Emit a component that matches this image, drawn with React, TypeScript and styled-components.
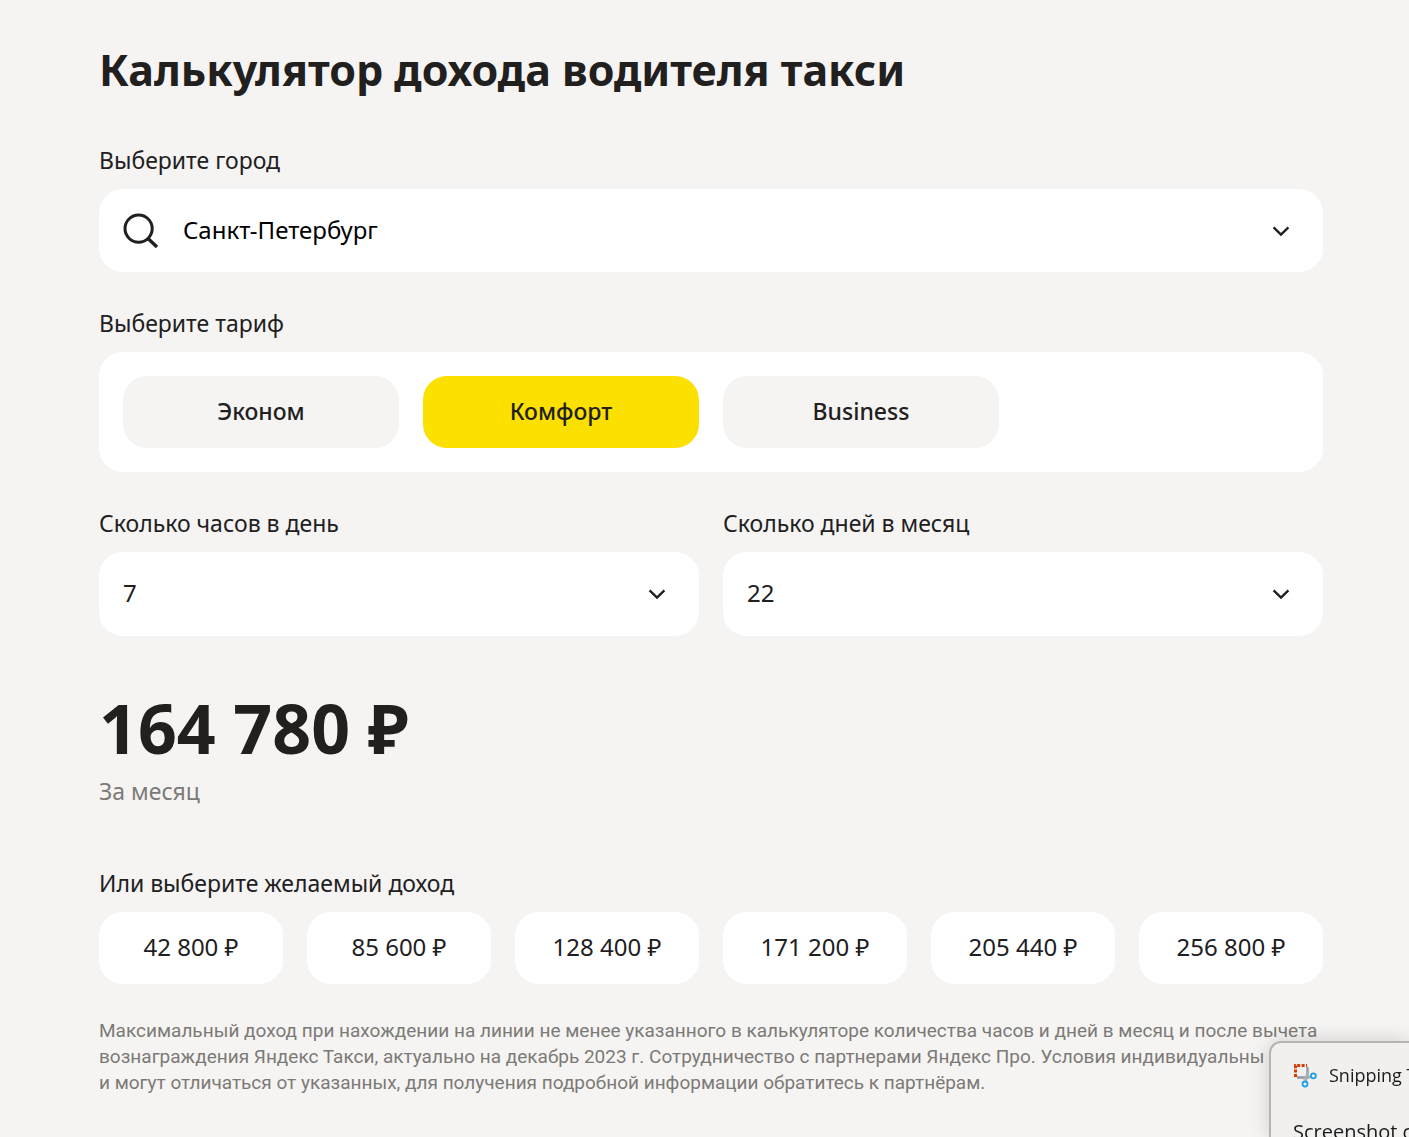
import React, { useState } from 'react';
import styled, { createGlobalStyle } from 'styled-components';

const GlobalStyle = createGlobalStyle`
  *, *::before, *::after { box-sizing: border-box; }
  body {
    margin: 0;
    background: #f5f4f2;
    color: #21201f;
    font-family: "Noto Sans", "Open Sans", sans-serif;
    font-size: 24px;
    line-height: 30px;
  }
  button, input, select { font: inherit; color: inherit; }
`;

const Page = styled.main`
  padding: 42px 86px 40px 99px;
`;

const Title = styled.h1`
  margin: 0 0 47px;
  font-size: 43px;
  line-height: 56px;
  font-weight: 700;
`;

const Form = styled.form`
  display: flex;
  flex-direction: column;
  gap: 36px;
`;

const Field = styled.div`
  display: flex;
  flex-direction: column;
  gap: 14px;
  min-width: 0;
`;

const Label = styled.label`
  display: block;
  font-size: 23px;
`;

const Columns = styled.div`
  display: grid;
  grid-template-columns: 1fr 1fr;
  gap: 24px;
`;

const Box = styled.div`
  display: flex;
  align-items: center;
  gap: 24px;
  height: 83px;
  padding: 0 24px;
  border-radius: 24px;
  background: #fff;
`;

const CityInput = styled.input`
  flex: 1;
  min-width: 0;
  height: 40px;
  padding: 0 0 2px;
  border: 0;
  outline: 0;
  background: transparent;
  color: #000;
`;

const ToggleButton = styled.button`
  display: flex;
  padding: 6px;
  border: 0;
  background: transparent;
  cursor: pointer;
`;

const SelectBox = styled.div`
  display: grid;
  align-items: center;
  border-radius: 24px;
  background: #fff;

  > * { grid-area: 1 / 1; }
  > svg { justify-self: end; margin-right: 30px; pointer-events: none; }
`;

const Select = styled.select`
  appearance: none;
  width: 100%;
  height: 84px;
  padding: 0 72px 2px 24px;
  border: 0;
  border-radius: 24px;
  outline: 0;
  background: transparent;
  cursor: pointer;
`;

const Tariffs = styled.div`
  display: flex;
  gap: 24px;
  padding: 24px;
  border-radius: 24px;
  background: #fff;
`;

const TariffButton = styled.button<{ $active: boolean }>`
  flex: 0 1 276px;
  height: 72px;
  padding: 0 0 2px;
  border: 0;
  border-radius: 24px;
  background: ${({ $active }) => ($active ? '#fce000' : '#f5f4f2')};
  font-size: 23px;
  font-weight: 500;
  cursor: pointer;
`;

const Result = styled.section`
  margin: 52px 0 62px;
`;

const Amount = styled.p`
  margin: 0 0 8px;
  font-size: 68px;
  line-height: 80px;
  font-weight: 700;
`;

const Period = styled.p`
  margin: 0;
  color: #7c7a77;
  font-size: 23px;
`;

const Incomes = styled.div`
  display: grid;
  grid-template-columns: repeat(6, 1fr);
  gap: 24px;
`;

const IncomeButton = styled.button`
  height: 72px;
  padding: 0 0 2px;
  border: 0;
  border-radius: 24px;
  background: #fff;
  white-space: nowrap;
  cursor: pointer;
`;

const Note = styled.p`
  margin: 34px 0 0;
  color: #7c7a77;
  font-family: Roboto, "Noto Sans", sans-serif;
  font-size: 19px;
  line-height: 26px;
`;

const Toast = styled.aside`
  position: fixed;
  right: 0;
  bottom: 0;
  width: 140px;
  height: 96px;
  padding: 18px 0 0 22px;
  overflow: hidden;
  border: 2px solid #b5b4b3;
  border-width: 2px 0 0 2px;
  border-top-left-radius: 12px;
  background: #f1f0ef;
  box-shadow: 0 0 20px rgba(0, 0, 0, 0.16);
  color: #1b1b1b;
  font-family: "Open Sans", "Noto Sans", sans-serif;
  line-height: 28px;
  white-space: nowrap;
`;

const ToastHeader = styled.div`
  display: flex;
  align-items: center;
  gap: 12px;
  font-size: 18px;

  > svg { flex: none; }
`;

const ToastTitle = styled.div`
  margin-top: 29px;
  font-size: 20px;
`;

const Chevron = () => (
  <svg width="24" height="24" viewBox="0 0 24 24" fill="none" stroke="#21201f" strokeWidth="2.4" aria-hidden="true">
    <path d="M4.6 8.4 12 15.6l7.4-7.2" />
  </svg>
);

const SearchIcon = () => (
  <svg width="36" height="36" viewBox="0 0 36 36" fill="none" stroke="#21201f" strokeWidth="3" aria-hidden="true">
    <circle cx="15.6" cy="15.6" r="13.6" />
    <path d="m25 25.4 9 8.6" strokeWidth="3.4" />
  </svg>
);

const SnipIcon = () => (
  <svg width="24" height="26" viewBox="0 0 24 26" fill="none" aria-hidden="true">
    <path d="M4 15.5h10.5V5" stroke="#8d979f" strokeWidth="2.4" />
    <path d="m10 16.5 8-1.6M14.6 9l-1.8 10" stroke="#a7afb5" strokeWidth="2.4" />
    <path d="M2.5 15V3.5H14" stroke="#d83b01" strokeWidth="3" strokeDasharray="3 1.4" />
    <circle cx="20.4" cy="13.8" r="2.5" stroke="#1ea0e6" strokeWidth="1.8" />
    <circle cx="12" cy="22" r="2.5" stroke="#1ea0e6" strokeWidth="1.8" />
  </svg>
);

const tariffs = ['Эконом', 'Комфорт', 'Business'];
const incomes = ['42 800 ₽', '85 600 ₽', '128 400 ₽', '171 200 ₽', '205 440 ₽', '256 800 ₽'];
const range = (n: number) => Array.from({ length: n }, (_, i) => i + 1);

export default function App() {
  const [city, setCity] = useState('Санкт-Петербург');
  const [tariff, setTariff] = useState('Комфорт');
  const [hours, setHours] = useState(7);
  const [days, setDays] = useState(22);

  return (
    <>
      <GlobalStyle />
      <Page>
        <Title>Калькулятор дохода водителя такси</Title>
        <Form onSubmit={(e) => e.preventDefault()}>
          <Field>
            <Label htmlFor="city">Выберите город</Label>
            <Box>
              <SearchIcon />
              <CityInput id="city" value={city} onChange={(e) => setCity(e.target.value)} />
              <ToggleButton type="button" aria-labelledby="city"><Chevron /></ToggleButton>
            </Box>
          </Field>
          <Field>
            <Label as="div" id="tariff">Выберите тариф</Label>
            <Tariffs role="group" aria-labelledby="tariff">
              {tariffs.map((t) => (
                <TariffButton key={t} type="button" $active={t === tariff} aria-pressed={t === tariff} onClick={() => setTariff(t)}>
                  {t}
                </TariffButton>
              ))}
            </Tariffs>
          </Field>
          <Columns>
            <Field>
              <Label htmlFor="hours">Сколько часов в день</Label>
              <SelectBox>
                <Select id="hours" value={hours} onChange={(e) => setHours(Number(e.target.value))}>
                  {range(12).map((n) => <option key={n} value={n}>{n}</option>)}
                </Select>
                <Chevron />
              </SelectBox>
            </Field>
            <Field>
              <Label htmlFor="days">Сколько дней в месяц</Label>
              <SelectBox>
                <Select id="days" value={days} onChange={(e) => setDays(Number(e.target.value))}>
                  {range(30).map((n) => <option key={n} value={n}>{n}</option>)}
                </Select>
                <Chevron />
              </SelectBox>
            </Field>
          </Columns>
        </Form>
        <Result>
          <Amount>164 780 ₽</Amount>
          <Period>За месяц</Period>
        </Result>
        <Field>
          <Label as="div" id="income">Или выберите желаемый доход</Label>
          <Incomes role="group" aria-labelledby="income">
            {incomes.map((v) => <IncomeButton key={v} type="button">{v}</IncomeButton>)}
          </Incomes>
        </Field>
        <Note>
          Максимальный доход при нахождении на линии не менее указанного в калькуляторе количества часов и дней в месяц и после вычета<br />
          вознаграждения Яндекс Такси, актуально на декабрь 2023 г. Сотрудничество с партнерами Яндекс Про. Условия индивидуальны<br />
          и могут отличаться от указанных, для получения подробной информации обратитесь к партнёрам.
        </Note>
      </Page>
      <Toast>
        <ToastHeader><SnipIcon />Snipping Tool</ToastHeader>
        <ToastTitle>Screenshot copied to clipboard</ToastTitle>
      </Toast>
    </>
  );
}
